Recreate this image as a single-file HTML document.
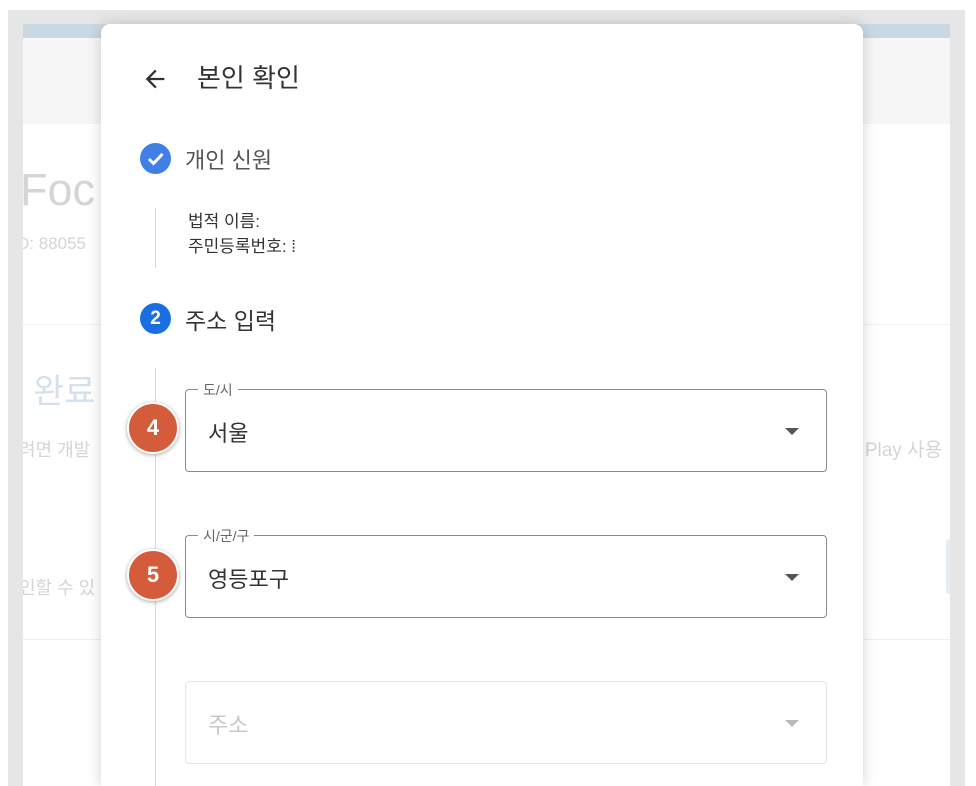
<!DOCTYPE html>
<html style="width:976px;height:786px;overflow:hidden"><head><meta charset="utf-8"><style>
*{box-sizing:border-box;margin:0;padding:0}
body{width:976px;height:786px;background:#fff;position:relative;overflow:hidden;font-family:"Liberation Sans","Noto Sans CJK KR",sans-serif}
.frame{position:absolute;left:8px;top:10px;width:957px;height:776px;background:#e6e6e6}
.page{position:absolute;left:23px;top:24px;width:927px;height:762px;background:#fff;overflow:hidden}
.bar{position:absolute;left:0;top:0;width:100%;height:14px;background:#c9d9e4}
.hdr{position:absolute;left:0;top:14px;width:100%;height:86px;background:#f6f6f6}
.bg{position:absolute;color:#d5d5d5;white-space:nowrap}
.line{position:absolute;height:1px;background:#eee;left:0;width:100%}
.dlg{position:absolute;left:101px;top:24px;width:762px;height:762px;background:#fff;border-radius:9px 9px 0 0;box-shadow:0 0 14px rgba(0,0,0,.18);overflow:hidden}
.abs{position:absolute;white-space:nowrap}
.vl{position:absolute;left:54px;width:1px;background:#dadada}
.field{position:absolute;left:84px;width:642px;height:83px;border:1px solid #8a8a8a;border-radius:4px}
.field .lab{position:absolute;left:12px;top:-10px;background:#fff;padding:0 5px;font-size:14px;color:#666}
.field .val{position:absolute;left:22px;top:26px;font-size:22px;color:#333}
.arr{position:absolute;right:27px;top:38px;width:0;height:0;border-left:7px solid transparent;border-right:7px solid transparent;border-top:7px solid #555}
.badge{position:absolute;left:26px;width:52px;height:52px;border-radius:50%;background:#d55c3b;border:2px solid #fff;box-shadow:0 1px 4px rgba(0,0,0,.35);color:#fff;font-weight:bold;font-size:22px;text-align:center;line-height:48px}
</style></head><body>
<div class="frame"></div>
<div class="page">
 <div class="bar"></div><div class="hdr"></div>
 <div class="bg" style="left:-3px;top:140px;font-size:45px">Foc</div>
 <div class="bg" style="left:-6px;top:210px;font-size:17px">D: 88055</div>
 <div class="line" style="top:300px"></div>
 <div class="bg" style="left:10px;top:340px;font-size:34px;color:#d4e1ec">완료</div>
 <div class="bg" style="left:-4px;top:412px;font-size:18px">려면 개발</div>
 <div class="bg" style="left:826px;top:411px;font-size:19px">e Play 사용</div>
 <div class="bg" style="left:-4px;top:550px;font-size:18px">인할 수 있</div>
 <div class="abs" style="left:923px;top:515px;width:6px;height:55px;background:#e3ecf7;border-radius:3px"></div>
 <div class="line" style="top:615px"></div>
</div>
<div class="dlg">
 <svg class="abs" style="left:40px;top:41px" width="28" height="28" viewBox="0 0 24 24"><path d="M20 11H7.8l5.6-5.6L12 4l-8 8 8 8 1.4-1.4L7.8 13H20z" fill="#333"/></svg>
 <div class="abs" style="left:96px;top:34px;font-size:26px;color:#333">본인 확인</div>
 <div class="abs" style="left:39px;top:119px;width:31px;height:31px;border-radius:50%;background:#3f7fe6"></div>
 <svg class="abs" style="left:39px;top:119px" width="31" height="31" viewBox="0 0 31 31"><path d="M9 16l4.5 4.5L22.5 11" stroke="#fff" stroke-width="3" fill="none"/></svg>
 <div class="abs" style="left:84px;top:119px;font-size:22px;color:#555">개인 신원</div>
 <div class="vl" style="top:184px;height:60px"></div>
 <div class="abs" style="left:87px;top:185px;font-size:17px;color:#333;line-height:25px">법적 이름:<br>주민등록번호: ⁞</div>
 <div class="abs" style="left:39px;top:279px;width:31px;height:31px;border-radius:50%;background:#1a6fe0;color:#fff;font-weight:bold;font-size:19px;text-align:center;line-height:31px">2</div>
 <div class="abs" style="left:84px;top:278px;font-size:23px;color:#333">주소 입력</div>
 <div class="vl" style="top:344px;height:418px"></div>
 <div class="field" style="top:365px"><span class="lab">도/시</span><span class="val">서울</span><span class="arr"></span></div>
 <div class="field" style="top:511px"><span class="lab">시/군/구</span><span class="val">영등포구</span><span class="arr"></span></div>
 <div class="field" style="top:657px;border-color:#e6e6e6"><span class="val" style="color:#c8c8c8">주소</span><span class="arr" style="border-top-color:#bbb"></span></div>
 <div class="badge" style="top:378px">4</div>
 <div class="badge" style="top:525px">5</div>
</div>
</body></html>
